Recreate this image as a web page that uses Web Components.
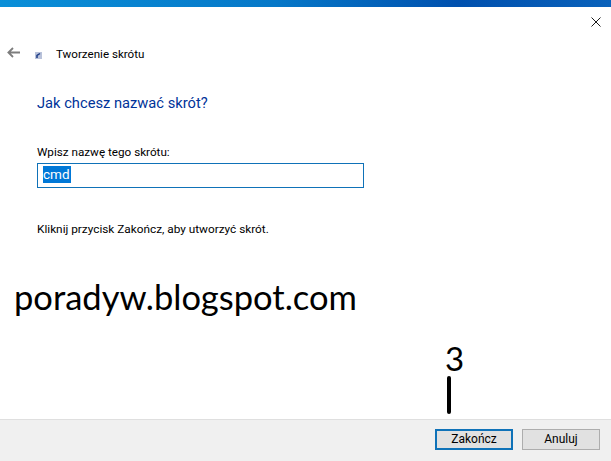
<!DOCTYPE html>
<html lang="pl">
<head>
<meta charset="utf-8">
<title>Tworzenie skrótu</title>
<style>
    html, body { margin: 0; padding: 0; height: 100%; background: #fff; }
    body { font-family: Roboto, "Noto Sans", sans-serif; }
</style>
</head>
<body>
<wizard-window>
    <wizard-header slot="header" title-text="Tworzenie skrótu"></wizard-header>
    <h-question>Jak chcesz nazwać skrót?</h-question>
    <name-field label="Wpisz nazwę tego skrótu:" value="cmd"></name-field>
    <p-hint>Kliknij przycisk Zakończ, aby utworzyć skrót.</p-hint>
    <blog-mark>poradyw.blogspot.com</blog-mark>
    <step-mark>3</step-mark>
    <wizard-button slot="footer" primary>Zakończ</wizard-button>
    <wizard-button slot="footer">Anuluj</wizard-button>
</wizard-window>

<script>
class WizardWindow extends HTMLElement {
    constructor() {
        super();
        this.attachShadow({ mode: "open" }).innerHTML = `
        <style>
            :host {
                display: flex;
                flex-direction: column;
                height: 461px;
                width: 611px;
                position: relative;
                overflow: hidden;
                background: #fff;
            }
            .accent {
                height: 7px;
                background: linear-gradient(90deg, #0a8fd8 0%, #0678c8 45%, #0050ae 75%, #0a62bb 100%);
            }
            .close {
                position: absolute;
                top: 17px;
                right: 10px;
                width: 10px;
                height: 10px;
            }
            main {
                flex: 1;
                display: flex;
                flex-direction: column;
            }
            footer {
                background: #f0f0f0;
                border-top: 1px solid #dfdfdf;
                display: flex;
                justify-content: flex-end;
                align-items: flex-start;
                gap: 9px;
                padding: 9px 11px 0 0;
                box-sizing: border-box;
                height: 42px;
            }
        </style>
        <div class="accent"></div>
        <svg class="close" viewBox="0 0 10 10"><path d="M.5.5l9 9M9.500.5l-9 9" stroke="#1a1a1a" stroke-width="1" fill="none"/></svg>
        <slot name="header"></slot>
        <main><slot></slot></main>
        <footer><slot name="footer"></slot></footer>`;
    }
}
customElements.define("wizard-window", WizardWindow);

class WizardHeader extends HTMLElement {
    constructor() {
        super();
        this.attachShadow({ mode: "open" }).innerHTML = `
        <style>
            :host {
                display: flex;
                align-items: center;
                height: 34px;
                margin-top: 29px;
                padding-left: 7px;
                font-size: 11.600px;
                color: #000;
            }
            svg { display: block; }
            .back { width: 13px; height: 11px; margin-top: -2px; }
            .icon { width: 7px; height: 7px; margin: 5px 0 0 15px; }
            span { margin-left: 14px; line-height: 16px; margin-top: 1px; }
        </style>
        <svg class="back" viewBox="0 0 13 11"><path d="M13 5.500H2M6 1L1.400 5.500 6 10" stroke="#7d7d7d" stroke-width="1.800" fill="none"/></svg>
        <svg class="icon" viewBox="0 0 7 7"><rect width="7" height="7" fill="#b9c2da"/><path d="M2 6V3.500L5 1.500" stroke="#1d3c86" stroke-width="1.500" fill="none"/></svg>
        <span>${this.getAttribute("title-text")}</span>`;
    }
}
customElements.define("wizard-header", WizardHeader);

class HQuestion extends HTMLElement {
    constructor() {
        super();
        this.attachShadow({ mode: "open" }).innerHTML = `
        <style>
            :host {
                display: block;
                margin: 22px 0 0 37px;
                font-size: 14.700px;
                line-height: 22px;
                color: #003399;
            }
        </style>
        <slot></slot>`;
    }
}
customElements.define("h-question", HQuestion);

class NameField extends HTMLElement {
    constructor() {
        super();
        this.attachShadow({ mode: "open" }).innerHTML = `
        <style>
            :host {
                display: block;
                margin: 30px 0 0 37px;
                font-size: 11.700px;
                color: #000;
            }
            label { display: block; line-height: 16px; }
            .box {
                box-sizing: border-box;
                width: 327px;
                height: 25px;
                margin-top: 3px;
                border: 1px solid #0f72b8;
                padding: 2px 0 0 5px;
                font-size: 13.500px;
                line-height: 17px;
            }
            .sel { display: inline-block; background: #0078d7; color: #fff; padding: 0 1px 0 0; }
        </style>
        <label>${this.getAttribute("label")}</label>
        <div class="box"><span class="sel">${this.getAttribute("value")}</span></div>`;
    }
}
customElements.define("name-field", NameField);

class PHint extends HTMLElement {
    constructor() {
        super();
        this.attachShadow({ mode: "open" }).innerHTML = `
        <style>
            :host {
                display: block;
                margin: 33px 0 0 37px;
                font-size: 11.800px;
                line-height: 16px;
                color: #000;
            }
        </style>
        <slot></slot>`;
    }
}
customElements.define("p-hint", PHint);

class BlogMark extends HTMLElement {
    constructor() {
        super();
        this.attachShadow({ mode: "open" }).innerHTML = `
        <style>
            :host {
                display: block;
                margin: 40px 0 0 14px;
                font-family: "Lato", "Noto Sans", sans-serif;
                font-size: 34.500px;
                line-height: 40px;
                color: #000;
            }
        </style>
        <slot></slot>`;
    }
}
customElements.define("blog-mark", BlogMark);

class StepMark extends HTMLElement {
    constructor() {
        super();
        this.attachShadow({ mode: "open" }).innerHTML = `
        <style>
            :host {
                position: absolute;
                left: 445px;
                top: 340px;
                width: 30px;
                display: flex;
                flex-direction: column;
                align-items: flex-start;
                font-family: "Lato", "Noto Sans", sans-serif;
                font-size: 33px;
                line-height: 36px;
                color: #000;
            }
            i { display: block; width: 4px; height: 38px; margin: 0 0 0 2px; background: #000; border-radius: 2px; }
        </style>
        <slot></slot><i></i>`;
    }
}
customElements.define("step-mark", StepMark);

class WizardButton extends HTMLElement {
    constructor() {
        super();
        this.attachShadow({ mode: "open" }).innerHTML = `
        <style>
            :host {
                display: block;
                box-sizing: border-box;
                width: 78px;
                height: 21px;
                background: #e1e1e1;
                border: 1px solid #adadad;
                font-size: 12px;
                line-height: 19px;
                text-align: center;
                color: #000;
            }
            :host([primary]) { border: 2px solid #0f72b8; line-height: 17px; }
        </style>
        <slot></slot>`;
    }
}
customElements.define("wizard-button", WizardButton);
</script>
</body>
</html>
